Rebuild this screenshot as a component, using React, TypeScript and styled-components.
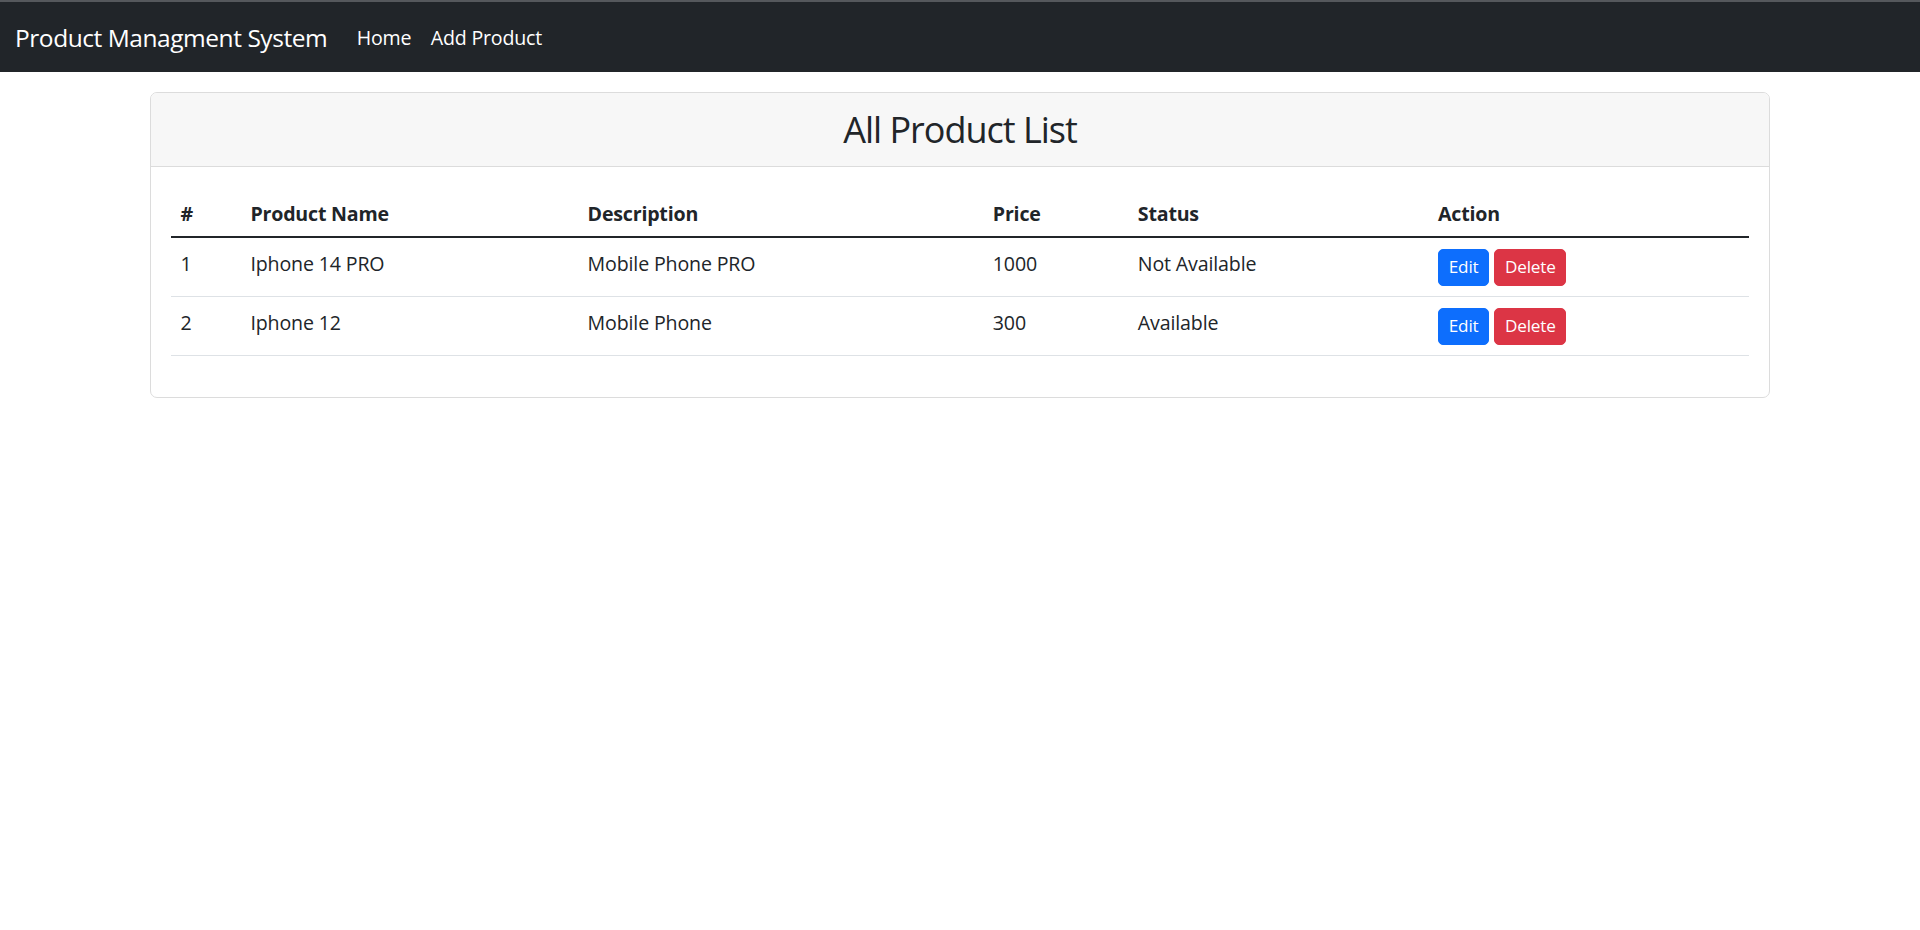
import { createGlobalStyle } from "styled-components";
import styled from "styled-components";

const GlobalStyle = createGlobalStyle`
	html {
		font-size: 19.6px;
	}
	body {
		margin: 0;
		background: #fff;
		color: #212529;
		font-family: "Open Sans", "Noto Sans", "Liberation Sans", sans-serif;
		line-height: 1.5;
	}
	* {
		box-sizing: border-box;
	}
`;

type Product = {
	id: number;
	name: string;
	description: string;
	price: number;
	status: string;
};

const products: Product[] = [
	{ id: 1, name: "Iphone 14 PRO", description: "Mobile Phone PRO", price: 1000, status: "Not Available" },
	{ id: 2, name: "Iphone 12", description: "Mobile Phone", price: 300, status: "Available" },
];

const columns = [
	{ label: "#", width: 70 },
	{ label: "Product Name", width: 337 },
	{ label: "Description", width: 405 },
	{ label: "Price", width: 145 },
	{ label: "Status", width: 300 },
	{ label: "Action", width: 321 },
];

export default function App() {
	return (
		<>
			<GlobalStyle />
			<Navbar>
				<Brand href="#">Product Managment System</Brand>
				<NavList>
					<NavLink href="#">Home</NavLink>
					<NavLink href="#">Add Product</NavLink>
				</NavList>
			</Navbar>
			<Container>
				<Card>
					<CardHeader>
						<Title>All Product List</Title>
					</CardHeader>
					<CardBody>
						<Table>
							<colgroup>
								{columns.map((c) => (
									<col key={c.label} style={{ width: c.width }} />
								))}
							</colgroup>
							<thead>
								<tr>
									{columns.map((c) => (
										<Th key={c.label}>{c.label}</Th>
									))}
								</tr>
							</thead>
							<tbody>
								{products.map((p) => (
									<tr key={p.id}>
										<Td>{p.id}</Td>
										<Td>{p.name}</Td>
										<Td>{p.description}</Td>
										<Td>{p.price}</Td>
										<Td>{p.status}</Td>
										<Td>
											<Actions>
												<Button $variant="primary">Edit</Button>
												<Button $variant="danger">Delete</Button>
											</Actions>
										</Td>
									</tr>
								))}
							</tbody>
						</Table>
					</CardBody>
				</Card>
			</Container>
		</>
	);
}

const Navbar = styled.nav`
	display: flex;
	align-items: center;
	height: 72px;
	padding: 2px 15px 0;
	background: #212529;
	border-top: 2px solid #55585c;
`;

const Brand = styled.a`
	margin-right: 1rem;
	font-size: 1.25rem;
	letter-spacing: -0.45px;
	color: #fff;
	text-decoration: none;
	white-space: nowrap;
`;

const NavList = styled.div`
	display: flex;
	align-items: center;
`;

const NavLink = styled.a`
	padding: 0 0.5rem;
	font-size: 1rem;
	letter-spacing: -0.2px;
	color: #fff;
	text-decoration: none;
`;

const Container = styled.div`
	width: 1620px;
	margin: 20px auto 0;
`;

const Card = styled.div`
	border: 1px solid #dcdcdc;
	border-radius: 7px;
	overflow: hidden;
`;

const CardHeader = styled.div`
	padding: 13px 19.6px;
	background: #f7f7f7;
	border-bottom: 1px solid #dcdcdc;
	text-align: center;
`;

const Title = styled.h2`
	margin: 0;
	font-size: 36px;
	font-weight: 400;
	letter-spacing: -1px;
	line-height: 47px;
`;

const CardBody = styled.div`
	padding: 19.6px 19.6px 21px;
`;

const Table = styled.table`
	width: 100%;
	table-layout: fixed;
	border-collapse: collapse;
	margin-bottom: 19.6px;
`;

const Th = styled.th`
	padding: 12px 9.8px 8.2px;
	text-align: left;
	font-weight: 700;
	line-height: 29.4px;
	letter-spacing: -0.2px;
	border-bottom: 2px solid #212529;
	vertical-align: bottom;
`;

const Td = styled.td`
	padding: 10.5px 9.8px 10.5px;
	line-height: 29.4px;
	letter-spacing: -0.15px;
	vertical-align: top;
	border-bottom: 1px solid #dee2e6;
`;

const Actions = styled.div`
	display: flex;
	gap: 5px;
`;

const Button = styled.button<{ $variant: "primary" | "danger" }>`
	height: 37px;
	padding: 0 9.8px;
	border: 1px solid ${(p) => (p.$variant === "primary" ? "#0d6efd" : "#dc3545")};
	border-radius: 5px;
	background: ${(p) => (p.$variant === "primary" ? "#0d6efd" : "#dc3545")};
	color: #fff;
	font-family: inherit;
	font-size: 17.15px;
	letter-spacing: -0.2px;
	line-height: 1.5;
	cursor: pointer;
`;
